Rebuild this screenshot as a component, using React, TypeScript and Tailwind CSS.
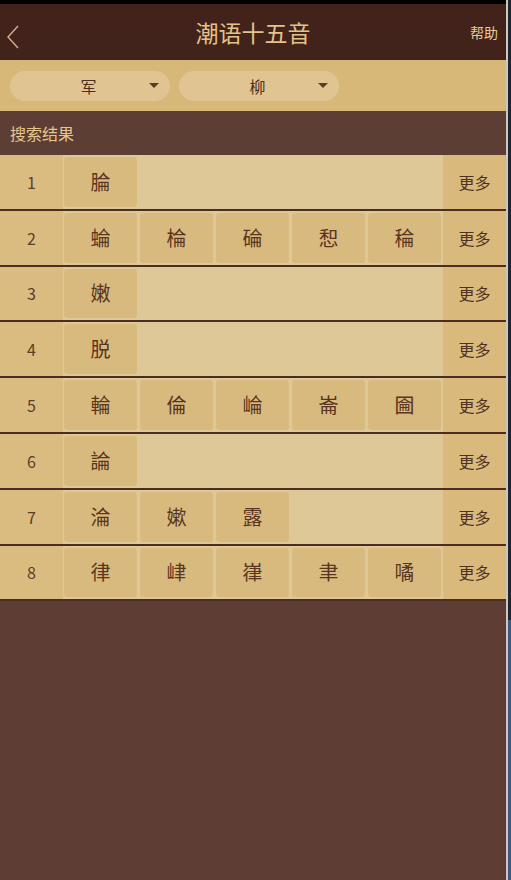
const FONT = {
  fontFamily: '"Noto Sans CJK SC", "Noto Sans", sans-serif',
};

const ROWS: string[][] = [
  ["腀"],
  ["蜦", "棆", "碖", "惒", "稐"],
  ["嫩"],
  ["脱"],
  ["輪", "倫", "崘", "崙", "圇"],
  ["論"],
  ["淪", "嫰", "露"],
  ["律", "峍", "嵂", "聿", "噊"],
];

function BackIcon() {
  return (
    <svg
      viewBox="0 0 12 24"
      className="absolute left-[7px] top-[21px] h-[24px] w-[12px]"
      fill="none"
      stroke="#d6ae86"
      strokeWidth="1.4"
      aria-hidden
    >
      <path d="M11 1L1 12l10 11" />
    </svg>
  );
}

function Dropdown({ label }: { label: string }) {
  return (
    <div className="flex h-[30px] w-[160px] items-center rounded-full bg-[#e0c592] pr-[11px]">
      <span className="flex-1 pl-[18px] text-center text-[16px] text-[#4d2f1f]">
        {label}
      </span>
      <span className="h-0 w-0 border-x-[5px] border-t-[5px] border-x-transparent border-t-[#5a3b28]" />
    </div>
  );
}

function ResultRow({ index, chars }: { index: number; chars: string[] }) {
  return (
    <div className="flex h-[55.8px] border-b-2 border-[#4b2d22] bg-[#dfc897]">
      <div className="flex w-[63px] items-center justify-center bg-[#dbbc80] text-[16px] text-[#5b3d2b]">
        {index}
      </div>
      <div className="flex flex-1 gap-[3px] py-[2px] pl-[1px]">
        {chars.map((c, i) => (
          <div
            key={i}
            className="flex w-[73px] items-center justify-center rounded-[3px] bg-[#d9ba7e] text-[20px] text-[#5a3520]"
          >
            {c}
          </div>
        ))}
      </div>
      <div className="flex w-[63px] items-center justify-center bg-[#dab97c] text-[16px] text-[#4d3222]">
        更多
      </div>
    </div>
  );
}

export default function App() {
  return (
    <div className="flex h-[880px] w-[511px] bg-[#5e3e34]" style={FONT}>
      <div className="flex w-[506px] flex-col">
        <div className="h-[4px] bg-black" />
        <header className="relative flex h-[56px] items-center justify-center bg-[#41231b]">
          <BackIcon />
          <h1 className="text-[23px] text-[#e3c388]">潮语十五音</h1>
          <span className="absolute right-[8px] text-[14px] text-[#e8cb96]">
            帮助
          </span>
        </header>
        <div className="flex h-[51px] items-center gap-[9px] bg-[#d8b878] pl-[10px]">
          <Dropdown label="军" />
          <Dropdown label="柳" />
        </div>
        <div className="flex h-[44px] items-center bg-[#5c3e34] pl-[10px] text-[16px] text-[#e6c690]">
          搜索结果
        </div>
        <div className="flex flex-col">
          {ROWS.map((chars, i) => (
            <ResultRow key={i} index={i + 1} chars={chars} />
          ))}
        </div>
      </div>
      <div className="flex w-[5px]">
        <div className="w-[2px] bg-[#cfc6bd]" />
        <div className="flex flex-1 flex-col">
          <div className="h-[620px] bg-[#1d2633]" />
          <div className="flex-1 bg-[#3a5c84]" />
        </div>
      </div>
    </div>
  );
}
